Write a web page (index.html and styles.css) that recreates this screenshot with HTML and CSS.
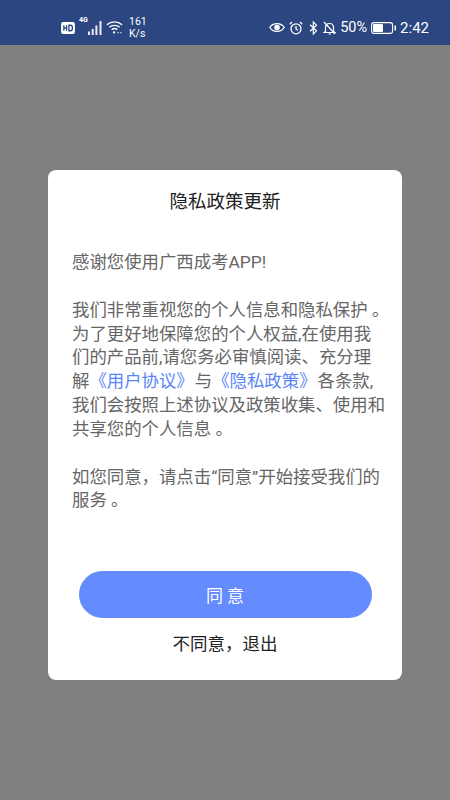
FILE: index.html
```html
<!DOCTYPE html>
<html lang="zh-CN">
<head>
<meta charset="utf-8">
<title>隐私政策更新</title>
<link rel="stylesheet" href="styles.css">
</head>
<body>
<div class="statusbar">
  <div class="st-left">
    <svg class="i-hd" width="14" height="12" viewBox="0 0 15 13"><rect width="15" height="13" rx="2.5" fill="#fff"/><path d="M3 3.5v6M6 3.5v6M3 6.500h3" stroke="#2b4680" stroke-width="1.400" fill="none"/><path d="M8.500 3.500v6h1.600c3 0 3-6 0-6z" stroke="#2b4680" stroke-width="1.400" fill="none"/></svg>
    <span class="net">4G</span>
    <svg class="i-sig" width="16" height="15" viewBox="0 0 16 15"><path d="M1 11.500h2V15H1zM4.700 9h2v6h-2zM8.400 5.500h2V15h-2zM12.500 1h2v14h-2z" fill="#e8ecf4"/></svg>
    <svg class="i-wifi" width="17" height="15" viewBox="0 0 18 15" fill="none" stroke="#fff" stroke-width="1.500"><path d="M1 4.500C5.500.5 12.500.5 17 4.500M3.500 7.200c3-2.600 8-2.600 11 0M6 9.800c1.800-1.500 4.200-1.500 6 0"/><circle cx="8.500" cy="12.700" r="1.200" fill="#fff" stroke="none"/><path d="M12 13h1.500M15 13h1.500" stroke-width="1"/></svg>
    <span class="speed"><span>161</span><span>K/s</span></span>
  </div>
  <div class="st-right">
    <svg class="i-eye" width="16" height="11" viewBox="0 0 16 11" fill="none" stroke="#fff" stroke-width="1.300"><path d="M.8 5.500C4 .3 12 .3 15.200 5.500 12 10.700 4 10.700.8 5.500z"/><circle cx="8" cy="5.500" r="2.800" fill="#fff" stroke="none"/></svg>
    <svg class="i-alarm" width="14" height="14" viewBox="0 0 14 14" fill="none" stroke="#fff" stroke-width="1.300"><circle cx="7" cy="7.800" r="5"/><path d="M7 5v3l2 1.300M.8 3.200 3 1M13.200 3.200 11 1"/></svg>
    <svg class="i-bt" width="9" height="14" viewBox="0 0 9 14" fill="none" stroke="#fff" stroke-width="1.200"><path d="M1 3.800 7.500 9.800 4.300 13V1l3.200 3.200L1 10.200"/></svg>
    <svg class="i-bell" width="13" height="14" viewBox="0 0 13 14" fill="none" stroke="#fff" stroke-width="1.200"><path d="M2.500 10.500V6.500C2.500 4 4.300 2.500 6.500 2.500S10.500 4 10.500 6.500v4l1.500 1H1zM5.500 13h2.500M1 1l11 12"/></svg>
    <span class="pct">50%</span>
    <svg class="i-bat" width="25" height="12" viewBox="0 0 25 12" fill="none"><rect x=".6" y=".6" width="21" height="10.800" rx="2.500" stroke="#fff" stroke-width="1.100"/><rect x="2" y="2" width="10" height="8" rx="1" fill="#fff"/><rect x="23.500" y="3.500" width="1.500" height="5" fill="#fff"/></svg>
    <span class="time">2:42</span>
  </div>
</div>
<main class="overlay">
  <section class="dialog">
    <h1 class="title">隐私政策更新</h1>
    <div class="body">
      <p>感谢您使用广西成考APP!</p>
      <p>我们非常重视您的个人信息和隐私保护 。<br>为了更好地保障您的个人权益,在使用我<br>们的产品前,请您务必审慎阅读、充分理<br>解<a class="link">《用户协议》</a>与<a class="link">《隐私政策》</a>各条款,<br>我们会按照上述协议及政策收集、使用和<br>共享您的个人信息 。</p>
      <p>如您同意，请点击“同意”开始接受我们的<br>服务 。</p>
    </div>
    <button class="agree">同 意</button>
    <button class="decline">不同意，退出</button>
  </section>
</main>
</body>
</html>
```
FILE: styles.css
```css
* { box-sizing: border-box; }
html, body { margin: 0; height: 100%; }
body {
  width: 450px;
  height: 800px;
  overflow: hidden;
  display: flex;
  flex-direction: column;
  background: #808080;
  font-family: "Roboto", "Noto Sans CJK SC", sans-serif;
}
.statusbar {
  height: 45px;
  flex: none;
  background: #2b4680;
  color: #fff;
  display: flex;
  justify-content: space-between;
  align-items: center;
  padding: 10px 21px 0 61px;
}
.st-left, .st-right { display: flex; align-items: center; }
.st-left { gap: 0; }
.st-right { gap: 4px; }
.net { width: 12px; padding-left: 4px; font-size: 7px; line-height: 8px; font-weight: 700; align-self: flex-start; }
.i-wifi { margin-left: 3px; }
.speed {
  display: flex;
  flex-direction: column;
  font-size: 10.500px;
  line-height: 12px;
  margin-left: 6px;
}
.i-alarm { margin-right: 2px; }
.i-bt { margin-right: 1px; }
.pct { font-size: 14.500px; }
.time { font-size: 15px; }
.overlay {
  flex: 1;
  padding: 125px 48px 120px;
  display: flex;
  flex-direction: column;
}
.dialog {
  height: 510px;
  background: #fff;
  border-radius: 8px;
  display: flex;
  flex-direction: column;
  align-items: center;
}
.title {
  margin: 19px 0 0;
  font-size: 18.500px;
  line-height: 26px;
  font-weight: 400;
  color: #222;
}
.body {
  width: 100%;
  height: 320px;
  margin-top: 36px;
  padding: 0 0 0 24px;
  font-size: 17.400px;
  line-height: 23.700px;
  color: #666;
  white-space: nowrap;
}
.body p { margin: 0 0 24.300px; }
.link { color: #5b85f5; margin-right: 1px; }
.agree {
  width: 293px;
  height: 47px;
  border: 0;
  border-radius: 24px;
  background: #648cff;
  color: #fff;
  font: inherit;
  font-size: 17px;
  flex: none;
}
.decline {
  border: 0;
  background: none;
  padding: 0;
  margin-top: 14px;
  font: inherit;
  font-size: 17.500px;
  line-height: 24px;
  color: #222;
}
```
